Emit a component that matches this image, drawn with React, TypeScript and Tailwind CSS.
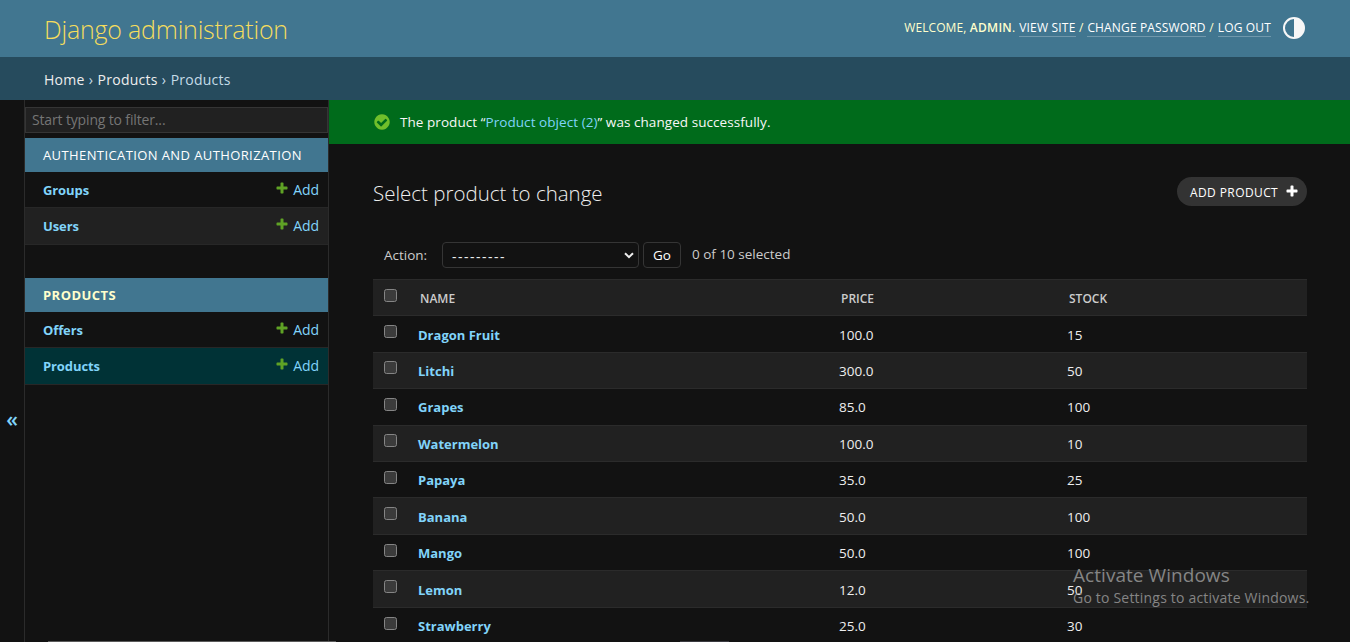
import React from "react";

type Product = { name: string; price: string; stock: string };

const products: Product[] = [
  { name: "Dragon Fruit", price: "100.0", stock: "15" },
  { name: "Litchi", price: "300.0", stock: "50" },
  { name: "Grapes", price: "85.0", stock: "100" },
  { name: "Watermelon", price: "100.0", stock: "10" },
  { name: "Papaya", price: "35.0", stock: "25" },
  { name: "Banana", price: "50.0", stock: "100" },
  { name: "Mango", price: "50.0", stock: "100" },
  { name: "Lemon", price: "12.0", stock: "50" },
  { name: "Strawberry", price: "25.0", stock: "30" },
];

function PlusIcon({ className }: { className: string }) {
  return (
    <svg viewBox="0 0 1792 1792" className={className} fill="currentColor">
      <path d="M1600 796v192q0 40-28 68t-68 28h-416v416q0 40-28 68t-68 28h-192q-40 0-68-28t-28-68v-416h-416q-40 0-68-28t-28-68v-192q0-40 28-68t68-28h416v-416q0-40 28-68t68-28h192q40 0 68 28t28 68v416h416q40 0 68 28t28 68z" />
    </svg>
  );
}

function Checkbox() {
  return (
    <span className="block size-[13px] rounded-[2.5px] border border-[#858585] bg-[#3b3b3b]" />
  );
}

function ModelRow({ name, className }: { name: string; className: string }) {
  return (
    <div
      className={`flex items-center border-b border-[#272727] pl-[18px] pr-[9px] text-[#81d4fa] ${className}`}
    >
      <a className="flex-1 text-[13px] font-bold leading-[20px] tracking-[-0.1px]">{name}</a>
      <PlusIcon className="-mt-[4px] mr-[4px] size-[14px] text-[#5fa225]" />
      <a className="text-[14px] leading-[20px] tracking-[-0.1px]">Add</a>
    </div>
  );
}

function Header() {
  return (
    <header className="flex h-[57px] shrink-0 items-center justify-between bg-[#417690] pl-[44px] pr-[44px]">
      <h1 className="mt-[1px] text-[25px] font-light leading-[30px] tracking-[-0.2px] text-[#f5dd5d]">
        Django administration
      </h1>
      <div className="flex items-center">
        <div className="-mt-px flex whitespace-pre text-[12px] leading-[17px] tracking-[0.15px] text-[#ffffcc]">
          <span className="tracking-[0.1px]">WELCOME, </span>
          <strong className="font-semibold tracking-[0.3px]">ADMIN</strong>
          <span className="tracking-[0.4px]">. </span>
          <a className="border-b border-white/25 tracking-[0.2px] text-white">VIEW SITE</a>
          <span className="tracking-[0.4px]"> / </span>
          <a className="border-b border-white/25 text-white">CHANGE PASSWORD</a>
          <span className="tracking-[0.5px]"> / </span>
          <a className="border-b border-white/25 text-white">LOG OUT</a>
        </div>
        <svg viewBox="0 0 24 24" className="-mt-[1px] ml-[11px] size-[24px] text-[#f7f7f7]">
          <circle cx="12" cy="12" r="10" fill="none" stroke="currentColor" strokeWidth="2" />
          <path d="M12 2a10 10 0 0 1 0 20z" fill="currentColor" />
        </svg>
      </div>
    </header>
  );
}

function Sidebar() {
  return (
    <nav className="flex w-[304px] shrink-0 flex-col border-r border-[#2b2b2b] pt-[7px]">
      <div className="flex h-[26px] items-center border border-[#353535] bg-[#212121] pb-[2px] pl-[6px] text-[14px] tracking-[-0.15px] text-[#757575]">
        Start typing to filter...
      </div>
      <div className="mt-[5px] flex h-[34px] items-center bg-[#417690] pl-[18px] pt-[2px] text-[13px] tracking-[0.4px] text-white">
        AUTHENTICATION AND AUTHORIZATION
      </div>
      <ModelRow name="Groups" className="h-[36px] pt-[1px]" />
      <ModelRow name="Users" className="h-[37px] bg-[#212121]" />
      <div className="mt-[33px] flex h-[34px] items-center bg-[#417690] pl-[18px] pt-[2px] text-[13px] font-bold tracking-[0.45px] text-[#ffffcc]">
        PRODUCTS
      </div>
      <ModelRow name="Offers" className="h-[36px] pt-[1px]" />
      <ModelRow name="Products" className="h-[37px] bg-[#003236]" />
    </nav>
  );
}

export default function App() {
  return (
    <div className="relative flex h-[642px] w-[1350px] flex-col overflow-hidden bg-[#121212] font-['Open_Sans','Noto_Sans',sans-serif] text-[#eeeeee]">
      <Header />
      <div className="flex h-[43px] shrink-0 items-center whitespace-pre bg-[#264b5d] pl-[44px] pt-[2px] text-[14px] tracking-[0.25px] text-[#c4dce8]">
        <a className="text-[#eeeeee]">Home</a>
        <span className="tracking-[0.5px]"> › </span>
        <a className="text-[#eeeeee]">Products</a>
        <span className="tracking-[0.5px]"> › </span>
        <span>Products</span>
      </div>
      <div className="flex min-h-0 flex-1">
        <button className="flex w-[25px] shrink-0 items-center justify-center border-r border-[#2b2b2b] pt-[98px] text-[21px] font-semibold text-[#81d4fa]">
          «
        </button>
        <Sidebar />
        <main className="min-w-0 flex-1">
          <div className="flex h-[44px] items-center whitespace-pre bg-[#006b1b] pl-[44px] text-[13.5px] tracking-[0.06px] text-[#f7f7f7]">
            <svg viewBox="0 0 1792 1792" className="mr-[9px] size-[18px] text-[#70bf2b]" fill="currentColor">
              <path d="M1412 734q0-28-18-46l-91-90q-19-19-45-19t-45 19l-408 407-226-226q-19-19-45-19t-45 19l-91 90q-18 18-18 46 0 27 18 45l362 362q19 19 45 19 27 0 46-19l543-543q18-18 18-45zm252 162q0 209-103 385.500t-279.500 279.500-385.500 103-385.500-103-279.500-279.500-103-385.500 103-385.500 279.500-279.500 385.500-103 385.500 103 279.500 279.500 103 385.500z" />
            </svg>
            <span>The product “</span>
            <a className="text-[#81d4fa]">Product object (2)</a>
            <span>” was changed successfully.</span>
          </div>
          <div className="pl-[44px] pr-[43px]">
            <div className="mt-[33px] flex h-[32px] items-start justify-between">
              <h2 className="mt-[1px] text-[20.5px] font-light leading-[31px]">Select product to change</h2>
              <a className="flex h-[29px] w-[130px] items-center rounded-full bg-[#333333] pl-[13px] pt-[2px] text-[12px] tracking-[0.4px] text-white">
                ADD PRODUCT
                <PlusIcon className="-mt-[4px] ml-[7px] size-[14px]" />
              </a>
            </div>
            <div className="mt-[33px] flex h-[26px] items-center pl-[11px] text-[13.5px] text-[#cccccc]">
              <span className="w-[58px]">Action:</span>
              <div className="flex h-[26px] w-[197px] items-center justify-between rounded-[4px] border border-[#353535] pl-[9px] pr-[4px] text-[14px] text-[#eeeeee]">
                <span className="mt-[2px] tracking-[1.5px]">---------</span>
                <svg viewBox="0 0 10 7" className="h-[7px] w-[10px]" fill="none" stroke="currentColor" strokeWidth="2">
                  <path d="M1 1.200l4 4 4-4" />
                </svg>
              </div>
              <div className="ml-[4px] flex h-[26px] w-[38px] items-center justify-center rounded-[4px] border border-[#353535] text-white">
                Go
              </div>
              <span className="-mt-[1px] ml-[11px]">0 of 10 selected</span>
            </div>
            <div className="mt-[11px]">
              <div className="grid h-[37.300px] grid-cols-[36px_421px_228px_1fr] items-center border-y border-[#2b2b2b] bg-[#212121] pl-[11px] text-[12px] font-semibold text-[#cccccc]">
                <div className="-mt-[4px]"><Checkbox /></div>
                <div className="pt-[2px]">NAME</div>
                <div className="pt-[2px]">PRICE</div>
                <div className="pt-[2px]">STOCK</div>
              </div>
              {products.map((p) => (
                <div
                  key={p.name}
                  className="grid h-[36.440px] grid-cols-[34px_421px_228px_1fr] items-center border-b border-[#2b2b2b] pl-[11px] text-[13.5px] leading-[20px] even:bg-[#121212] odd:bg-[#212121]"
                >
                  <div className="-mt-[5px]"><Checkbox /></div>
                  <a className="pt-[1px] text-[13px] font-bold text-[#81d4fa]">{p.name}</a>
                  <span className="pt-[1px]">{p.price}</span>
                  <span className="pt-[1px]">{p.stock}</span>
                </div>
              ))}
            </div>
          </div>
        </main>
      </div>
      <div className="absolute left-[1073px] top-[563px] whitespace-nowrap text-[#858585]">
        <div className="text-[19px] leading-[24px] tracking-[0.05px]">Activate Windows</div>
        <div className="pt-[1px] text-[14px] leading-[20px] tracking-[0.2px]">Go to Settings to activate Windows.</div>
      </div>
      <div className="absolute bottom-0 left-[48px] h-px w-[288px] bg-[#5a5a5a]" />
      <div className="absolute bottom-0 left-[680px] h-px w-[49px] bg-[#3a3a40]" />
    </div>
  );
}
